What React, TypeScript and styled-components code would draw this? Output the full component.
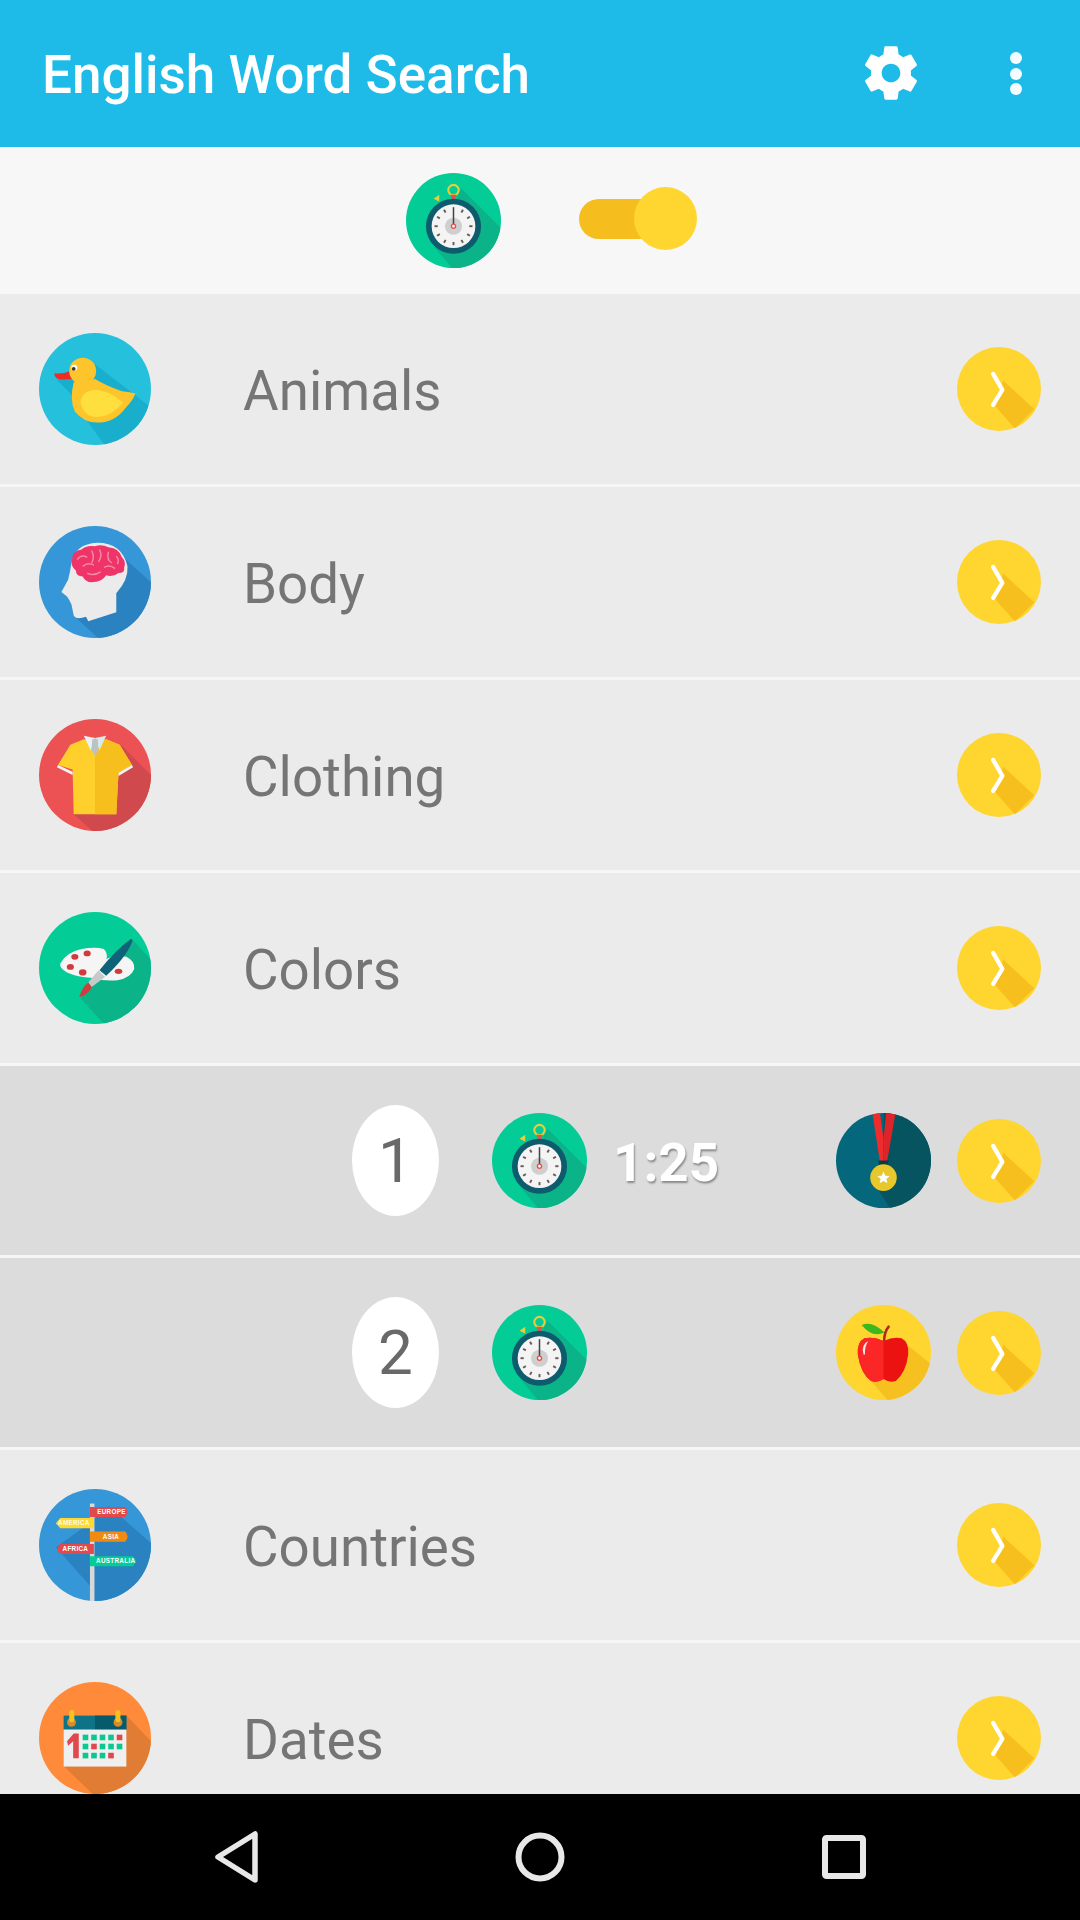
import React from "react";
import styled, { createGlobalStyle } from "styled-components";

const Global = createGlobalStyle`
  html, body { margin: 0; padding: 0; width: 1080px; height: 1920px; overflow: hidden; background: #000; }
  #root { width: 1080px; height: 1920px; }
`;

const Screen = styled.div`
  width: 1080px;
  height: 1920px;
  display: flex;
  flex-direction: column;
  font-family: Roboto, "Liberation Sans", sans-serif;
  overflow: hidden;
`;

const AppBar = styled.header`
  height: 147px;
  flex: none;
  background: #1ebbe8;
  display: flex;
  align-items: center;
  padding: 0 58px 0 42px;
  box-sizing: border-box;
`;

const Title = styled.h1`
  margin: 0 auto 0 0;
  position: relative;
  top: 1px;
  font-size: 53px;
  font-weight: 500;
  color: #fff;
  white-space: nowrap;
`;

const GearButton = styled.div`
  width: 64px;
  height: 64px;
  margin-right: 87px;
  position: relative;
  top: -1px;
`;

const DotsColumn = styled.div`
  display: flex;
  flex-direction: column;
  gap: 3.5px;
`;

const Dot = styled.span`
  width: 12px;
  height: 12px;
  border-radius: 50%;
  background: #fff;
  display: block;
  opacity: 0.95;
`;

const TimerBar = styled.div`
  height: 147px;
  flex: none;
  background: #f7f7f7;
  display: flex;
  align-items: center;
  padding-left: 406px;
  box-sizing: border-box;
`;

const Toggle = styled.div`
  width: 118px;
  height: 63px;
  margin-left: 78px;
  position: relative;
  top: -2px;
`;

const ToggleTrack = styled.div`
  position: absolute;
  left: 0;
  top: 12px;
  width: 80px;
  height: 40px;
  background: #f5be1e;
  border-radius: 20px;
`;

const ToggleThumb = styled.div`
  position: absolute;
  right: 0;
  top: 0;
  width: 63px;
  height: 63px;
  background: #ffd52f;
  border-radius: 50%;
`;

const List = styled.div`
  flex: 1;
  min-height: 0;
  overflow: hidden;
`;

const Row = styled.div<{ $sub?: boolean }>`
  height: ${(p) => (p.$sub ? 189 : 190)}px;
  box-sizing: content-box;
  border-bottom: 3px solid #f6f6f6;
  background: ${(p) => (p.$sub ? "#dcdcdc" : "#ebebeb")};
  display: flex;
  align-items: center;
  padding: 0 39px;
`;

const CategoryIcon = styled.div`
  width: 112px;
  height: 112px;
  flex: none;
`;

const Label = styled.div`
  margin-left: 92px;
  font-size: 54.7px;
  color: #757575;
  flex: 1;
  white-space: nowrap;
  position: relative;
  top: 2px;
`;

const ArrowBox = styled.div`
  width: 84px;
  height: 84px;
  flex: none;
`;

const NumberBubble = styled.div`
  width: 87px;
  height: 111px;
  margin-left: 313px;
  background: #fff;
  border-radius: 50%;
  display: flex;
  align-items: center;
  justify-content: center;
  flex: none;
  font-size: 62px;
  color: #696969;
`;

const WatchBox = styled.div`
  width: 95px;
  height: 95px;
  flex: none;
`;

const SubWatch = styled(WatchBox)`
  margin-left: 53px;
`;

const Time = styled.div`
  margin-left: 26px;
  font-size: 53px;
  font-weight: 700;
  color: #fff;
  text-shadow: 1px 2px 2px #8a8a8a;
  white-space: nowrap;
  position: relative;
  top: 2px;
`;

const Spacer = styled.div`
  flex: 1;
`;

const Badge = styled.div`
  width: 95px;
  height: 95px;
  flex: none;
  margin-right: 26px;
`;

const NavBar = styled.nav`
  height: 126px;
  flex: none;
  background: #000;
  display: flex;
  align-items: center;
  padding-left: 211px;
`;

const NavIcon = styled.svg<{ $gap: number }>`
  width: 54px;
  height: 54px;
  margin-right: ${(p) => p.$gap}px;
`;

/* Icons: 100-unit viewBox circles with long shadows */

const Circle: React.FC<{ bg: string; shadow: string; clip: string; children?: React.ReactNode; sd: string }> = ({ bg, shadow, clip, children, sd }) => (
  <svg viewBox="0 0 100 100" width="100%" height="100%" style={{ display: "block" }}>
    <defs>
      <clipPath id={clip}>
        <circle cx="50" cy="50" r="50" />
      </clipPath>
    </defs>
    <circle cx="50" cy="50" r="50" fill={bg} />
    <g clipPath={`url(#${clip})`}>
      <path d={sd} fill={shadow} />
    </g>
    {children}
  </svg>
);

const Duck = () => (
  <Circle bg="#25c0dc" shadow="#19aecb" clip="c-duck" sd="M16 42 L30 56 L44 80 L60 102 L102 102 L102 68 L50 28 Z">
    <path d="M30 33 Q22 37 14 36 Q13 39 17 41 Q25 42.5 33 40 Z" fill="#ee2b25" />
    <circle cx="39" cy="34" r="12" fill="#fec42c" />
    <path d="M31 44 Q27 60 32 70 Q40 80 52 80 Q68 80 78 66 Q84 60 86 54 Q82 53 74 52 Q60 47 50 41 Z" fill="#fec42c" />
    <path d="M37 62 Q38 52 50 51 Q62 51 75 62 Q66 74 52 75 Q40 75 37 62 Z" fill="#ffdf3e" />
    <circle cx="31.5" cy="31" r="2.6" fill="#fff" />
    <circle cx="31" cy="32" r="1.7" fill="#3a3a2a" />
  </Circle>
);

const Brain = () => (
  <Circle bg="#3697d8" shadow="#2b82c0" clip="c-brain" sd="M72 25 L102 52 L102 102 L55 102 L33 82 Z">
    <path d="M29 33 Q32 16 52 15 Q74 15 79 36 Q80 48 69 60 L69 77 L44 85 L42 81 Q33 84 31 80 L29 70 L27 66 L25 63 L20 59 L26 48 Q28 40 29 33 Z" fill="#ebebeb" />
    <path d="M29.5 30 Q30 22 38 21 Q42 17 50 18 Q56 16 62 19 Q72 20 74 28 Q78 32 76 37 Q77 42 71 42 Q66 46 60 44 Q56 50 49 50 Q42 51 39 45 Q33 45 33 40 Q28 36 29.5 30 Z" fill="#ee3468" />
    <path d="M34 30 Q38 25 43 28 M39 36 Q44 32 49 35 M47 22 Q50 28 47 33 M54 21 Q57 27 53 32 M62 23 Q60 30 65 33 M43 42 Q49 45 55 41 M58 37 Q63 34 68 38 M69 27 Q72 30 70 34" stroke="#f78aa6" strokeWidth="1.3" fill="none" />
  </Circle>
);

const Shirt = () => (
  <Circle bg="#ec5254" shadow="#d0494d" clip="c-shirt" sd="M60 18 L74 24 L102 52 L102 102 L50 102 L31 85 L50 30 Z">
    <path d="M40 18 L50 20 L60 18 L72 23 L83 41 L71 48 L69 85 L31 85 L30 45 L17 41 L28 23 Z" fill="#ffd02c" />
    <path d="M50 20 L60 18 L72 23 L83 41 L71 48 L69 85 L50 85 Z" fill="#f7bf1d" />
    <path d="M17 41 L30 47 L30 50 L16 43 Z M83 41 L71 48 L71 51 L84 43 Z" fill="#f3f3f3" />
    <path d="M40 15 L50 17 L46 28 Z" fill="#e8f2f2" />
    <path d="M60 15 L50 17 L54 28 Z" fill="#d8eaea" />
    <path d="M47.5 18 L52.5 18 L53 28 L50 33 L47 28 Z" fill="#b9c3c3" />
  </Circle>
);

const Palette = () => (
  <Circle bg="#03cc96" shadow="#0bb389" clip="c-pal" sd="M83 24 L102 45 L102 102 L60 102 L37 77 L60 50 Z">
    <path d="M19 46 Q24 36 38 33 Q50 31 58 33 Q62 38 60 42 Q68 38 78 40 Q86 44 85 51 Q82 59 70 61 Q58 62 48 59 Q34 58 25 54 Q18 50 19 46 Z" fill="#f5f5f5" />
    <ellipse cx="32" cy="40" rx="3.2" ry="2.6" fill="#d13b3e" />
    <ellipse cx="43" cy="37" rx="3.2" ry="2.6" fill="#d13b3e" />
    <ellipse cx="28" cy="49" rx="3.2" ry="2.6" fill="#d13b3e" />
    <ellipse cx="39" cy="54" rx="3.4" ry="2.8" fill="#d13b3e" />
    <ellipse cx="71" cy="53" rx="3.4" ry="2.4" fill="#d13b3e" />
    <path d="M82 24 Q84 24 83 27 Q78 40 60 57 L54 52 Q68 34 82 24 Z" fill="#0d6478" />
    <path d="M53 52 L59 58 L47 67 L44 63 Z" fill="#c9c9c9" />
    <path d="M44 63 L47 67 Q44 74 36 76 Q38 68 44 63 Z" fill="#d13b3e" />
  </Circle>
);

const Signs = () => (
  <Circle bg="#3697d8" shadow="#2b82c0" clip="c-sign" sd="M62 15 L102 50 L102 102 L46 102 L46 87 L15 52 L46 30 Z">
    <rect x="45.5" y="13" width="4" height="87" fill="#d8d8d8" />
    <path d="M45.5 16 L77 16 Q81 20 77 25 L45.5 25 Z" fill="#e04a4c" />
    <path d="M49 26 L19 26 L15 30.5 L19 35 L49 35 Z" fill="#ffd92f" />
    <path d="M45.5 38 L77 38 Q81 42.5 77 47 L45.5 47 Z" fill="#f08a12" />
    <path d="M49 49 L19 49 Q14 53.5 19 58 L49 58 Z" fill="#e04a4c" />
    <path d="M45.5 60 L84 60 L87 64.5 L84 69 L45.5 69 Z" fill="#03cc96" />
    <g fontFamily="Liberation Sans, sans-serif" fontWeight="700" fontSize="5.6" fill="#fff" letterSpacing="0.3">
      <text x="52" y="22.5">EUROPE</text>
      <text x="17" y="32.5" fill="#fffbe0">AMERICA</text>
      <text x="57" y="44.5">ASIA</text>
      <text x="21" y="55.5">AFRICA</text>
      <text x="51" y="66.5">AUSTRALIA</text>
    </g>
  </Circle>
);

const Calendar = () => {
  const cells: React.ReactNode[] = [];
  const reds = new Set(["4-0", "1-1", "3-2"]);
  for (let r = 0; r < 3; r++) {
    for (let c = 0; c < 5; c++) {
      if (r === 2 && c === 4) continue;
      cells.push(
        <rect key={`${r}${c}`} x={39 + c * 7.6} y={47 + r * 8.1} width="5" height="5" fill={reds.has(`${c}-${r}`) ? "#e0484e" : "#0bc792"} />
      );
    }
  }
  return (
    <Circle bg="#fe8a3a" shadow="#e07c33" clip="c-cal" sd="M78 30 L102 55 L102 102 L50 102 L22 75 L22 40 Z">
      <rect x="22" y="30" width="56" height="12.5" fill="#0f7388" />
      <rect x="50" y="30" width="28" height="12.5" fill="#055b6c" />
      <rect x="22" y="42.5" width="56" height="33" fill="#efefef" />
      <circle cx="29" cy="36" r="4" fill="#d98a2a" />
      <circle cx="70.5" cy="36" r="4" fill="#d98a2a" />
      <rect x="27" y="25" width="4.5" height="11" rx="2" fill="#f6c120" />
      <rect x="68.2" y="25" width="4.5" height="11" rx="2" fill="#f6c120" />
      <path d="M25 53 L31 46 L35.5 46 L35.5 68 L30.5 68 L30.5 53 L26 57 Z" fill="#e0484e" />
      {cells}
    </Circle>
  );
};

const Watch: React.FC<{ id: string }> = ({ id }) => {
  const ticks = [30, 60, 90, 120, 150, 180, 210, 240, 270, 300, 330];
  return (
    <Circle bg="#03cc96" shadow="#0bb389" clip={id} sd="M58 16 L102 60 L102 102 L50 102 L30 78 Z">
      <circle cx="50" cy="18" r="5.5" fill="none" stroke="#e6cf3a" strokeWidth="2.2" />
      <path d="M46.5 23 L53.5 23 L51.5 28 L48.5 28 Z" fill="#e2534c" />
      <path d="M35 23 L35 30 L29 27 Z" fill="#e6cf3a" />
      <circle cx="50" cy="56" r="29" fill="#0e5b6e" />
      <circle cx="50" cy="56" r="23" fill="#f4f4f4" />
      <circle cx="50" cy="56" r="9" fill="#cfcfcf" />
      {ticks.map((a) => (
        <rect key={a} x="49" y="36" width="2" height="3.4" fill="#6a5a55" transform={`rotate(${a} 50 56)`} />
      ))}
      <rect x="49.2" y="36" width="1.6" height="19" fill="#444" />
      <circle cx="50" cy="56" r="2.2" fill="#f4f4f4" stroke="#e2534c" strokeWidth="1.4" />
    </Circle>
  );
};

const Medal = () => (
  <Circle bg="#05677b" shadow="#05545f" clip="c-medal" sd="M50 0 L102 0 L102 102 L58 102 L44 80 L50 50 Z">
    <g clipPath="url(#c-medal)">
      <path d="M38 -2 L46 -2 L50 27 L50 52 L46 50 Z" fill="#ee2c2c" />
      <path d="M63 -2 L53 -2 L50 27 L50 52 L54 50 Z" fill="#dd2529" />
    </g>
    <rect x="45" y="50" width="10" height="5" fill="#0b3b45" />
    <circle cx="50" cy="68" r="14" fill="#e7c72b" />
    <path d="M50 61.5 L51.9 66 L56.6 66.3 L53 69.4 L54.1 74 L50 71.5 L45.9 74 L47 69.4 L43.4 66.3 L48.1 66 Z" fill="#fff" />
  </Circle>
);

const Apple = () => (
  <Circle bg="#ffd52f" shadow="#f6c020" clip="c-apple" sd="M70 38 L102 64 L102 102 L56 102 L37 80 Z">
    <path d="M50 38 Q40 33 30 35 Q22 39 23 52 Q26 72 37 80 Q44 82 50 78 Q56 82 63 80 Q74 70 76 52 Q77 39 69 35 Q60 33 50 38 Z" fill="#ec1212" />
    <path d="M50 38 Q40 33 30 35 Q22 39 23 52 Q26 72 37 80 Q44 82 50 78 Z" fill="#fb2727" />
    <path d="M29 52 Q26 42 34 38 Q30 44 30.5 52 Z" fill="#fff" opacity="0.9" />
    <path d="M49.5 38 Q49 28 55 21 L57 23 Q52 29 52 38 Z" fill="#b02a1a" />
    <path d="M27 21 Q38 16 51 29 Q38 35 27 21 Z" fill="#3cb81e" />
  </Circle>
);

const Arrow: React.FC<{ id: string }> = ({ id }) => (
  <Circle bg="#ffd52f" shadow="#f7bf1d" clip={id} sd="M55 40 L92 74 L69 97 L46 71 Z">
    <path d="M43 32 L54 51 L43 69" fill="none" stroke="#fff" strokeWidth="5" strokeLinecap="round" strokeLinejoin="round" />
  </Circle>
);

const CategoryRow: React.FC<{ label: string; icon: React.ReactNode; id: string }> = ({ label, icon, id }) => (
  <Row>
    <CategoryIcon>{icon}</CategoryIcon>
    <Label>{label}</Label>
    <ArrowBox><Arrow id={id} /></ArrowBox>
  </Row>
);

export default function App() {
  return (
    <Screen>
      <Global />
      <AppBar>
        <Title>English Word Search</Title>
        <GearButton>
          <svg viewBox="0 0 24 24" width="64" height="64" fill="#fff" style={{ display: "block" }}>
            <path d="M19.43 12.98c.04-.32.07-.64.07-.98s-.03-.66-.07-.98l2.11-1.65c.19-.15.24-.42.12-.64l-2-3.46c-.12-.22-.39-.3-.61-.22l-2.49 1c-.52-.4-1.08-.73-1.69-.98l-.38-2.65C14.46 2.18 14.25 2 14 2h-4c-.25 0-.46.18-.49.42l-.38 2.65c-.61.25-1.17.59-1.69.98l-2.49-1c-.23-.09-.49 0-.61.22l-2 3.46c-.13.22-.07.49.12.64l2.11 1.65c-.04.32-.07.65-.07.98s.03.66.07.98l-2.11 1.65c-.19.15-.24.42-.12.64l2 3.46c.12.22.39.3.61.22l2.49-1c.52.4 1.08.73 1.69.98l.38 2.65c.03.24.24.42.49.42h4c.25 0 .46-.18.49-.42l.38-2.65c.61-.25 1.17-.59 1.69-.98l2.49 1c.23.09.49 0 .61-.22l2-3.46c.12-.22.07-.49-.12-.64l-2.11-1.65zM12 15.5c-1.93 0-3.5-1.57-3.5-3.5s1.57-3.5 3.5-3.5 3.5 1.57 3.5 3.5-1.57 3.5-3.5 3.5z" />
          </svg>
        </GearButton>
        <DotsColumn><Dot /><Dot /><Dot /></DotsColumn>
      </AppBar>
      <TimerBar>
        <WatchBox><Watch id="w0" /></WatchBox>
        <Toggle>
          <ToggleTrack />
          <ToggleThumb />
        </Toggle>
      </TimerBar>
      <List>
        <CategoryRow label="Animals" icon={<Duck />} id="a1" />
        <CategoryRow label="Body" icon={<Brain />} id="a2" />
        <CategoryRow label="Clothing" icon={<Shirt />} id="a3" />
        <CategoryRow label="Colors" icon={<Palette />} id="a4" />
        <Row $sub>
          <NumberBubble>1</NumberBubble>
          <SubWatch><Watch id="w1" /></SubWatch>
          <Time>1:25</Time>
          <Spacer />
          <Badge><Medal /></Badge>
          <ArrowBox><Arrow id="a5" /></ArrowBox>
        </Row>
        <Row $sub>
          <NumberBubble>2</NumberBubble>
          <SubWatch><Watch id="w2" /></SubWatch>
          <Spacer />
          <Badge><Apple /></Badge>
          <ArrowBox><Arrow id="a6" /></ArrowBox>
        </Row>
        <CategoryRow label="Countries" icon={<Signs />} id="a7" />
        <CategoryRow label="Dates" icon={<Calendar />} id="a8" />
      </List>
      <NavBar>
        <NavIcon $gap={248} viewBox="0 0 54 54" fill="none" stroke="#e8e8e8" strokeWidth="5.5" strokeLinejoin="round">
          <path d="M44 4 L44 50 L7 27 Z" />
        </NavIcon>
        <NavIcon $gap={250} viewBox="0 0 54 54" fill="none" stroke="#e8e8e8" strokeWidth="6">
          <circle cx="27" cy="27" r="21.5" />
        </NavIcon>
        <NavIcon $gap={0} viewBox="0 0 54 54" fill="none" stroke="#e8e8e8" strokeWidth="6" strokeLinejoin="round">
          <rect x="8" y="8" width="38" height="38" rx="1.5" />
        </NavIcon>
      </NavBar>
    </Screen>
  );
}
